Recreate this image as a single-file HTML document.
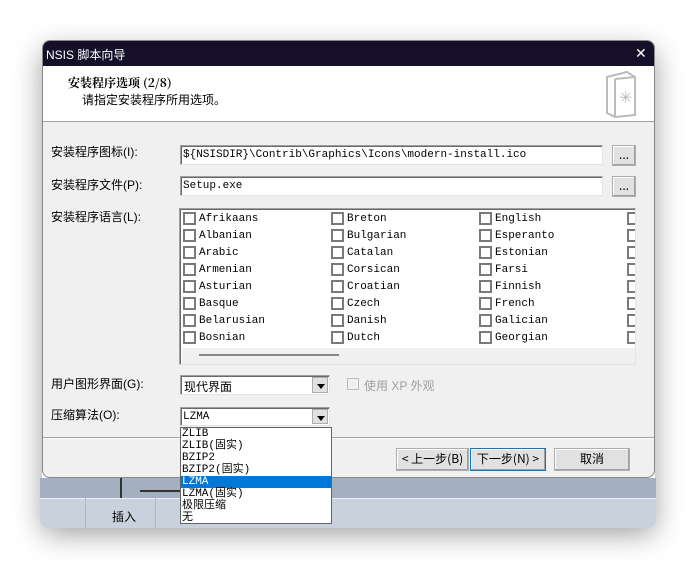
<!DOCTYPE html>
<html><head><meta charset="utf-8"><style>
*{margin:0;padding:0;box-sizing:border-box}
body{width:698px;height:566px;background:#fff;position:relative;overflow:hidden;font-family:"Liberation Sans","Noto Sans CJK SC",sans-serif;font-size:12px;color:#000}
.a{position:absolute}
.m{font-family:"Liberation Mono","Noto Sans CJK SC",monospace;font-size:11px}
.in{background:#fff;border:1px solid #a0a0a0;border-right-color:#e3e3e3;border-bottom-color:#e3e3e3;box-shadow:inset 1px 1px 0 #696969}
.btn{background:#e1e1e1;border:1px solid #adadad;box-shadow:inset -1px -1px 0 #a0a0a0,inset 1px 1px 0 #fff;text-align:center;font-family:"Noto Sans CJK SC",sans-serif;font-size:12px}
.cb{position:absolute;width:13px;height:13px;border:2px solid #7a7a7a;background:#fff}
.dd{position:absolute;right:1px;top:1px;width:16px;bottom:1px;background:#e1e1e1;border:1px solid #adadad}
.dd:after{content:"";position:absolute;left:4px;top:6px;border-left:4px solid transparent;border-right:4px solid transparent;border-top:5px solid #000}
</style></head><body>
<div class="a" style="left:42px;top:42px;width:613px;height:484px;box-shadow:0 8px 28px rgba(0,0,0,.38);border-radius:8px"></div>
<div class="a" style="left:40px;top:478px;width:616px;height:50px;background:#c9d1dc;border-radius:0 0 8px 8px;overflow:hidden">
 <div class="a" style="left:0;top:0;width:616px;height:20px;background:#a4b0c0"></div>
 <div class="a" style="left:80px;top:0;width:2px;height:20px;background:#333"></div>
 <div class="a" style="left:100px;top:12px;width:40px;height:2px;background:#333"></div>
 <div class="a" style="left:0;top:20px;width:616px;height:1px;background:#eef"></div>
 <div class="a" style="left:45px;top:20px;width:1px;height:30px;background:#b0b8c4"></div>
 <div class="a" style="left:115px;top:20px;width:1px;height:30px;background:#b0b8c4"></div>
 <div class="a" style="left:72px;top:30px;font-size:12px;font-family:'Noto Sans CJK SC',sans-serif">插入</div>
</div>
<div class="a" style="left:42px;top:40px;width:613px;height:438px;background:#f0f0f0;border-radius:8px;overflow:hidden;border:1px solid #888">
 <div class="a" style="left:0;top:0;width:613px;height:25px;background:#150f2a;color:#fff;font-size:12px;padding:5px 0 0 3px">NSIS 脚本向导</div>
 <div class="a" style="left:592px;top:4px;color:#fff;font-size:14px;font-weight:300">✕</div>
 <div class="a" style="left:0;top:25px;width:613px;height:56px;background:#fff;border-bottom:1px solid #a0a0a0"></div>
 <div class="a" style="left:25px;top:33px;font-weight:bold;font-family:'Noto Serif CJK SC',serif;font-size:12px">安装程序选项 (2/8)</div>
 <div class="a" style="left:39px;top:50px;font-size:12px">请指定安装程序所用选项。</div>
 <svg class="a" style="left:560px;top:28px" width="36" height="50"><path d="M4 8 L24 3 L32 8 L32 46 L12 48 L4 44 Z" fill="#fff" stroke="#bbb" stroke-width="2"/><path d="M12 10 L32 8 M12 10 L12 48" stroke="#bbb" stroke-width="2" fill="none"/><text x="16" y="34" fill="#bbb" font-size="16">✳</text></svg>
</div>
<div class="a" style="left:51px;top:143px">安装程序图标(I):</div>
<div class="a" style="left:51px;top:176px">安装程序文件(P):</div>
<div class="a" style="left:51px;top:208px">安装程序语言(L):</div>
<div class="a" style="left:51px;top:375px">用户图形界面(G):</div>
<div class="a" style="left:51px;top:406px">压缩算法(O):</div>
<div class="a in m" style="left:180px;top:145px;width:423px;height:20px;padding:3px 0 0 2px">${NSISDIR}\Contrib\Graphics\Icons\modern-install.ico</div>
<div class="a btn" style="left:612px;top:145px;width:24px;height:21px;line-height:17px">...</div>
<div class="a in m" style="left:180px;top:176px;width:423px;height:20px;padding:3px 0 0 2px">Setup.exe</div>
<div class="a btn" style="left:612px;top:176px;width:24px;height:21px;line-height:17px">...</div>
<div class="a in" style="left:179px;top:208px;width:457px;height:157px;overflow:hidden" id="lb">
 <div class="a" style="left:2px;top:139px;width:453px;height:16px;background:#f0f0f0"></div>
 <div class="a" style="left:19px;top:145px;width:140px;height:2px;background:#888"></div>
</div>
<div class="a in" style="left:180px;top:375px;width:150px;height:20px;padding:2px 0 0 3px;font-family:'Noto Sans CJK SC',sans-serif">现代界面<div class="dd"></div></div>
<div class="a" style="left:347px;top:378px;width:12px;height:12px;border:1px solid #bbb;background:#f0f0f0"></div>
<div class="a" style="left:364px;top:377px;color:#a0a0a0">使用 XP 外观</div>
<div class="a in m" style="left:180px;top:407px;width:150px;height:19px;padding:3px 0 0 2px">LZMA<div class="dd"></div></div>
<div class="a" style="left:43px;top:437px;width:611px;height:1px;background:#a0a0a0"></div>
<div class="a" style="left:43px;top:438px;width:611px;height:1px;background:#fff"></div>
<div class="a btn" style="left:396px;top:448px;width:73px;height:23px;line-height:20px">&lt; 上一步(B)</div>
<div class="a btn" style="left:470px;top:448px;width:76px;height:23px;line-height:20px;border-color:#0078d7">下一步(N) &gt;</div>
<div class="a btn" style="left:554px;top:448px;width:76px;height:23px;line-height:20px">取消</div>
<div class="a m" style="left:180px;top:427px;width:152px;height:97px;background:#fff;border:1px solid #646464;line-height:12px;font-size:11px">
<div style="padding-left:1px">ZLIB</div><div style="padding-left:1px">ZLIB(固实)</div><div style="padding-left:1px">BZIP2</div><div style="padding-left:1px">BZIP2(固实)</div><div style="padding-left:1px;background:#0078d7;color:#fff">LZMA</div><div style="padding-left:1px">LZMA(固实)</div><div style="padding-left:1px">极限压缩</div><div style="padding-left:1px">无</div>
</div>
<script>
var L=[["Afrikaans","Albanian","Arabic","Armenian","Asturian","Basque","Belarusian","Bosnian"],["Breton","Bulgarian","Catalan","Corsican","Croatian","Czech","Danish","Dutch"],["English","Esperanto","Estonian","Farsi","Finnish","French","Galician","Georgian"]];
var lb=document.getElementById('lb'),h='';
for(var c=0;c<4;c++)for(var r=0;r<8;r++){var x=3+c*148,y=3+r*17;h+='<div class="cb" style="left:'+x+'px;top:'+y+'px"></div>';if(c<3)h+='<div class="a m" style="left:'+(x+16)+'px;top:'+(y+1)+'px">'+L[c][r]+'</div>';}
lb.insertAdjacentHTML('afterbegin',h);
</script>
</body></html>
